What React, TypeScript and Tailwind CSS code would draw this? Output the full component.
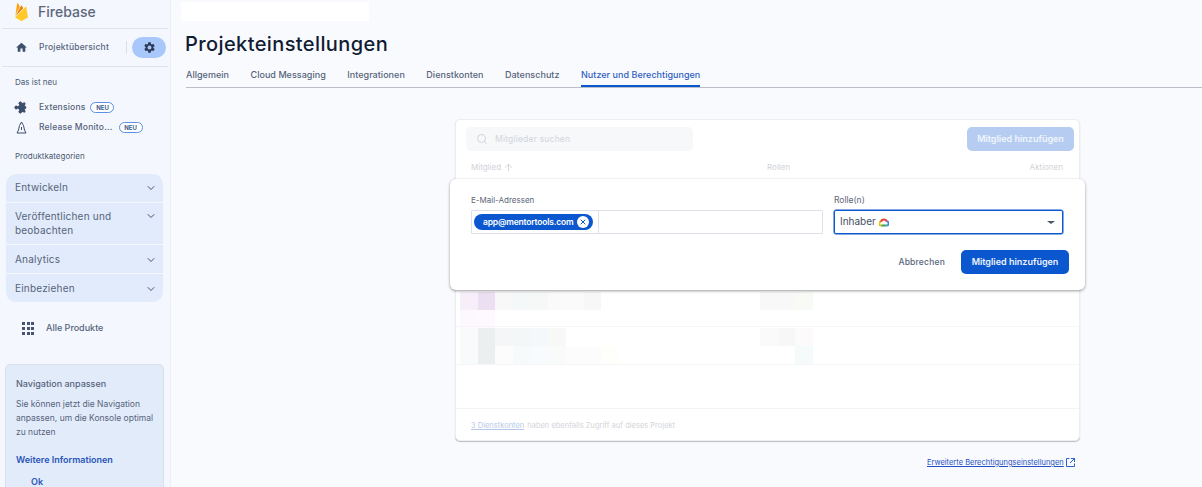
import React from 'react';
import { ChevronDown, Search, ArrowUp, X } from 'lucide-react';
import { MdHome, MdSettings, MdExtension } from 'react-icons/md';

const NavGroup: React.FC<{ label: string; className?: string }> = ({ label, className }) => (
  <div className={`flex justify-between bg-[#e1ebfb] pl-[9px] pr-[6px] text-[10px] leading-[14px] tracking-[0.2px] text-[#56647a] ${className ?? ''}`}>
    <span className="w-[118px]">{label}</span>
    <ChevronDown className="w-[12px] h-[12px] mt-[1px] text-[#47566e]" strokeWidth={2} />
  </div>
);

const NeuBadge: React.FC = () => (
  <span className="flex items-center justify-center w-[24px] h-[11px] rounded-full border border-[#5b8fe8] text-[6px] font-bold text-[#41618f] bg-white">NEU</span>
);

type Cell = { w: number; c: string };

const PixelRow: React.FC<{ cells: Cell[] }> = ({ cells }) => (
  <div className="flex h-[18px]">
    {cells.map((cell, i) => (
      <div key={i} className="h-full shrink-0" style={{ width: cell.w, backgroundColor: cell.c }} />
    ))}
  </div>
);

const leftRows: Cell[][] = [
  [{ w: 18, c: '#f6eef8' }, { w: 17, c: '#ecdff2' }, { w: 18, c: '#f8f8f8' }, { w: 17, c: '#f4f8f8' }, { w: 18, c: '#f6f8f7' }, { w: 18, c: '#fafafa' }, { w: 18, c: '#fafafa' }, { w: 17, c: '#f7f7f7' }],
  [{ w: 18, c: '#fcf8fd' }, { w: 17, c: '#fdf9fe' }],
  [{ w: 18, c: '#f8fafb' }, { w: 17, c: '#ebeff0' }, { w: 18, c: '#f4f6f7' }, { w: 17, c: '#f4f7f8' }, { w: 18, c: '#f4f8fa' }, { w: 18, c: '#f8f9f7' }],
  [{ w: 18, c: '#f8fafb' }, { w: 17, c: '#ebeff0' }, { w: 18, c: '#fcfcfc' }, { w: 17, c: '#f7fafb' }, { w: 18, c: '#f7fbfd' }, { w: 18, c: '#f9fbfb' }, { w: 18, c: '#fcfcfc' }, { w: 17, c: '#fcfcfc' }, { w: 17, c: '#fefefb' }],
];
const rightRows: Cell[][] = [
  [{ w: 18, c: '#f8f8f9' }, { w: 17, c: '#f8f8f8' }, { w: 18, c: '#f8faf5' }],
  [],
  [{ w: 18, c: '#fafafa' }, { w: 17, c: '#f7f7f7' }, { w: 18, c: '#fdfafc' }],
  [{ w: 18, c: '#ffffff' }, { w: 17, c: '#ffffff' }, { w: 18, c: '#f5fafa' }],
];

const Tab: React.FC<{ label: string; active?: boolean }> = ({ label, active }) => (
  <div className={`h-[19px] text-[9px] font-medium tracking-[0.03px] leading-[14px] ${active ? 'text-[#2f5fc4] border-b-2 border-[#0b57d0]' : 'text-[#56647a]'}`}>
    {label}
  </div>
);

export default function App() {
  return (
    <div className="flex w-[1202px] h-[487px] overflow-hidden bg-[#f9fafe] font-['Inter',sans-serif]">
      {/* Sidebar */}
      <aside className="w-[171px] shrink-0 h-full overflow-hidden bg-[#f4f7fe] border-r border-[#eceff7]">
        <div className="flex items-center h-[28px] pb-[5px] pl-[15px] gap-[10px]">
          <svg width="13" height="18" viewBox="3.3 0 17.4 24" className="shrink-0">
            <path d="M3.89 15.672L6.255.461A.542.542 0 017.27.288l2.543 4.771z" fill="#ffa000" />
            <path d="M14.3 7.147l-1.82-3.482a.542.542 0 00-.96 0L3.53 17.984z" fill="#f57c00" />
            <path d="M20.684 19.364l-2.25-14a.54.54 0 00-.919-.295L3.316 19.365l7.856 4.427a1.621 1.621 0 001.588 0z" fill="#ffca28" />
          </svg>
          <span className="text-[14px] leading-[20px] font-medium text-[#5c677c]">Firebase</span>
        </div>
        <div className="h-px bg-[#dfe3ee] mx-[2px]" />
        <div className="flex items-center h-[37px] pl-[15px]">
          <MdHome className="w-[13px] h-[13px] text-[#3d4f6b]" />
          <span className="ml-[11px] w-[87px] text-[8.5px] tracking-[0.2px] text-[#56647a] font-medium">Projektübersicht</span>
          <div className="w-px h-[13px] bg-[#dbdfe9]" />
          <div className="ml-[5px] flex items-center justify-center w-[34px] h-[21px] rounded-full bg-[#a8c7fa]">
            <MdSettings className="w-[13px] h-[13px] text-[#2b3a55]" />
          </div>
        </div>
        <div className="h-px bg-[#dfe3ee] mx-[2px]" />
        <div className="pl-[15px] mt-[9px] text-[8px] leading-[12px] text-[#4b5a70]">Das ist neu</div>
        <div className="flex items-center h-[21px] mt-[9px] pl-[15px]">
          <MdExtension className="w-[13px] h-[13px] shrink-0 rotate-45 text-[#3d4f6b]" />
          <span className="ml-[11px] text-[8.5px] tracking-[0.2px] text-[#56647a] font-medium">Extensions</span>
          <span className="ml-[5px]"><NeuBadge /></span>
        </div>
        <div className="flex items-center h-[21px] -mt-px pl-[16px]">
          <svg width="11" height="13" viewBox="0 0 11 13" className="shrink-0" fill="none" stroke="#3d4f6b" strokeWidth="1">
            <path d="M5.5 1 Q8 4 8.5 9 L10 12 H1 L2.5 9 Q3 4 5.5 1Z M5.5 6 V9" />
          </svg>
          <span className="ml-[12px] text-[8.5px] tracking-[0.2px] text-[#56647a] font-medium">Release Monito...</span>
          <span className="ml-[6px]"><NeuBadge /></span>
        </div>
        <div className="pl-[15px] mt-[12px] text-[8px] leading-[12px] text-[#4b5a70]">Produktkategorien</div>

        <div className="ml-[6px] w-[157px] mt-[12px] flex flex-col gap-px rounded-[10px] overflow-hidden">
          <NavGroup label="Entwickeln" className="h-[28px] items-center pb-[2px]" />
          <NavGroup label="Veröffentlichen und beobachten" className="h-[41px] pt-[6px]" />
          <NavGroup label="Analytics" className="h-[28px] items-center" />
          <NavGroup label="Einbeziehen" className="h-[28px] items-center" />
        </div>

        <div className="flex items-center mt-[17px] pl-[22px] h-[18px]">
          <div className="grid grid-cols-3 gap-[2px] w-[12px]">
            {Array.from({ length: 9 }).map((_, i) => (
              <div key={i} className="w-[3px] h-[3px] bg-[#47566e]" />
            ))}
          </div>
          <span className="ml-[12px] text-[9px] font-medium text-[#56647a]">Alle Produkte</span>
        </div>

        <div className="ml-[5px] w-[159px] h-[140px] mt-[27px] rounded-t-[5px] bg-[#e2ebfa] border border-[#d9dfeb] pl-[10px] pr-[8px] pt-[13px]">
          <div className="text-[9px] leading-[12px] font-medium text-[#56647a]">Navigation anpassen</div>
          <p className="mt-[7px] text-[8.5px] leading-[14px] text-[#56647a]">Sie können jetzt die Navigation anpassen, um die Konsole optimal zu nutzen</p>
          <div className="mt-[15px] text-[9px] leading-[12px] font-semibold text-[#2a55b8]">Weitere Informationen</div>
          <div className="mt-[10px] ml-[15px] text-[9px] leading-[12px] font-semibold text-[#2a55b8]">Ok</div>
        </div>
      </aside>

      {/* Main */}
      <main className="flex-1 min-w-0 relative pl-[10px] pt-[2px]">
        <div className="w-[188px] h-[19px] bg-white" />
        <h1 className="mt-[9px] ml-[4px] text-[20px] leading-[28px] font-medium tracking-[0.4px] text-[#0f1c33]">Projekteinstellungen</h1>
        <div className="mt-[10px] ml-[5px] flex gap-[21.5px] border-b border-[#b9bec8] h-[20px]">
          <Tab label="Allgemein" />
          <Tab label="Cloud Messaging" />
          <Tab label="Integrationen" />
          <Tab label="Dienstkonten" />
          <Tab label="Datenschutz" />
          <Tab label="Nutzer und Berechtigungen" active />
        </div>

        {/* Member table, dimmed behind the dialog */}
        <div className="ml-[274px] mt-[31px] w-[625px] h-[322px] rounded-[5px] bg-white border border-[#eceef2] shadow-[0_1px_1px_rgba(0,0,0,0.25)] relative overflow-hidden">
          <div className="flex justify-between pl-[10px] pr-[5px] pt-[7px]">
            <div className="flex items-center w-[227px] h-[24px] rounded-[5px] bg-[#f7f8fa] pl-[10px]">
              <Search className="w-[12px] h-[12px] text-[#d0d3d9]" />
              <span className="ml-[7px] text-[8.5px] tracking-[0.2px] text-[#d2d5da]">Mitglieder suchen</span>
            </div>
            <div className="flex items-center justify-center w-[107px] h-[24px] rounded-[5px] bg-[#b6cdf1] text-[9px] font-semibold text-[#f0f5fd]">Mitglied hinzufügen</div>
          </div>
          <div className="flex items-center mt-[10px] h-[12px] pl-[15px] text-[8px] text-[#d0d3d8]">
            <span>Mitglied</span>
            <ArrowUp className="w-[11px] h-[11px] ml-[2px]" />
            <span className="ml-[253px]">Rollen</span>
            <span className="ml-auto mr-[16px]">Aktionen</span>
          </div>

          <div className="absolute left-[4px] top-[172px]">
            {leftRows.map((cells, i) => <PixelRow key={i} cells={cells} />)}
          </div>
          <div className="absolute left-[304px] top-[172px]">
            {rightRows.map((cells, i) => <PixelRow key={i} cells={cells} />)}
          </div>
          <div className="absolute left-0 right-0 top-[206px] h-px bg-[#f6f6f8]" />
          <div className="absolute left-0 right-0 top-[244px] h-px bg-[#f6f6f8]" />

          <div className="absolute left-0 right-0 bottom-0 h-[32px] pt-[3px] border-t border-[#f2f3f5] pl-[15px] flex items-center text-[7.5px] text-[#d3d5d9]">
            <span className="text-[#b6c8e8] underline">3 Dienstkonten</span>
            <span className="ml-[3px]">haben ebenfalls Zugriff auf dieses Projekt</span>
          </div>
        </div>

        <div className="ml-[746px] mt-[16px] flex items-center text-[7.5px] text-[#1f4fc0]">
          <span className="underline">Erweiterte Berechtigungseinstellungen</span>
          <svg width="9" height="9" viewBox="0 0 9 9" fill="none" stroke="#2a62d6" strokeWidth="1" className="ml-[2px]">
            <path d="M3.5 0.5 H0.5 V8.5 H8.5 V5.5 M5 0.5 H8.5 V4 M8.5 0.5 L4 5" />
          </svg>
        </div>

        {/* Add member dialog */}
        <div className="absolute left-[279px] top-[179px] w-[635px] h-[111px] rounded-[6px] bg-white shadow-[0_1px_3px_rgba(0,0,0,0.4)] pl-[21px] pr-[16px] pt-[15px]">
          <div className="flex">
            <div className="w-[352px]">
              <div className="text-[8px] leading-[12px] text-[#5b6679]">E-Mail-Adressen</div>
              <div className="mt-[4px] h-[24px] flex border border-[#dfe1ea] rounded-[1px]">
                <div className="w-[127px] border-r border-[#dfe1ea] flex items-center pl-[2px]">
                  <div className="flex items-center w-[119px] h-[16px] rounded-full bg-[#0b57d0] pl-[9px]">
                    <span className="text-[8.5px] font-semibold tracking-[-0.2px] text-white">app@mentortools.com</span>
                    <span className="ml-[4px] flex items-center justify-center w-[12px] h-[12px] rounded-full bg-white">
                      <X className="w-[8px] h-[8px] text-[#0b57d0]" strokeWidth={3} />
                    </span>
                  </div>
                </div>
              </div>
            </div>
            <div className="ml-[11px] w-[229px]">
              <div className="text-[8.5px] leading-[12px] text-[#5b6679]">Rolle(n)</div>
              <div className="mt-[4px] h-[24px] flex items-center border border-[#0b57d0] rounded-[2px] pl-[5px] pr-[7px] shadow-[0_0_0_0.5px_#0b57d0]">
                <span className="text-[10px] -mt-px text-[#44505f]">Inhaber</span>
                <svg width="10" height="9" viewBox="0 0 10 8" className="ml-[3px]">
                  <path d="M2.3 7 A1.9 1.9 0 0 1 2 3.2" fill="none" stroke="#fbbc04" strokeWidth="2" />
                  <path d="M2 3.3 A3 3 0 0 1 7.8 3.1" fill="none" stroke="#ea4335" strokeWidth="2" />
                  <path d="M7.8 3.1 A1.9 1.9 0 0 1 7.7 7" fill="none" stroke="#4285f4" strokeWidth="2" />
                  <path d="M2.3 7 H7.7" stroke="#34a853" strokeWidth="2" />
                </svg>
                <div className="ml-auto w-0 h-0 border-l-[4px] border-r-[4px] border-t-[3px] border-l-transparent border-r-transparent border-t-[#4a5568]" />
              </div>
            </div>
          </div>
          <div className="flex justify-end items-center mt-[16px]">
            <span className="text-[8.5px] font-medium tracking-[0.2px] text-[#56657c]">Abbrechen</span>
            <div className="ml-[16px] flex items-center justify-center w-[108px] h-[24px] rounded-[5px] bg-[#0b57d0] text-[9px] font-semibold text-[#eef3fd]">Mitglied hinzufügen</div>
          </div>
        </div>
      </main>
    </div>
  );
}
